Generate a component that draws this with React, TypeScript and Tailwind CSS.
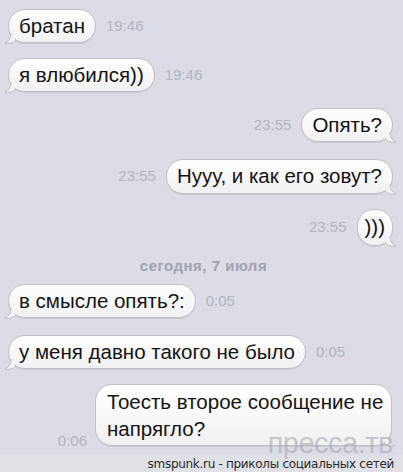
import React from "react";

type Msg = {
  text: string;
  time: string;
  out?: boolean;
  mt: string;
  h?: string;
  px?: string;
};

const TOP: Msg[] = [
  { text: "братан", time: "19:46", mt: "mt-[9px]" },
  { text: "я влюбился))", time: "19:46", mt: "mt-[15px]" },
  { text: "Опять?", time: "23:55", out: true, mt: "mt-[16px]" },
  { text: "Нууу, и как его зовут?", time: "23:55", out: true, mt: "mt-[17px]", h: "h-[35px]" },
  { text: ")))", time: "23:55", out: true, mt: "mt-[15px]", h: "h-[37px]", px: "px-[7px]" },
];

const TODAY: Msg[] = [
  { text: "в смысле опять?:", time: "0:05", mt: "mt-[9px]" },
  { text: "у меня давно такого не было", time: "0:05", mt: "mt-[17px]" },
];

function Tail({ out }: { out?: boolean }) {
  // little curl at the bottom corner of a bubble
  return (
    <svg
      width="14"
      height="12"
      viewBox="0 0 14 12"
      className={
        out
          ? "absolute -right-[5px] bottom-[-3px] -scale-x-100"
          : "absolute -left-[5px] bottom-[-3px]"
      }
    >
      <path d="M7 0 C7 5 5 8 1 10 C5 11 9 10 12 7 Z" fill="#f3f3f5" stroke="#b9bac3" strokeWidth="1" />
      <path d="M7 -1 L13 -1 L13 7 L8 4 Z" fill="#f3f3f5" />
    </svg>
  );
}

function Time({ t, className = "" }: { t: string; className?: string }) {
  return <span className={`text-[15px] leading-[17px] text-[#b2b4bf] shrink-0 ${className}`}>{t}</span>;
}

function Bubble({ m }: { m: Msg }) {
  return (
    <div className={`flex items-center gap-[10px] ${m.mt} ${m.out ? "justify-end pr-[10px]" : "pl-[8px]"}`}>
      {m.out && <Time t={m.time} className="-mt-[2px]" />}
      <div
        className={`relative flex items-center rounded-[17px] border border-[#bfc0c8] bg-gradient-to-b from-white to-[#f1f1f3] ${m.px ?? "px-[10px]"} text-[20.5px] leading-none text-[#141414] shadow-[0_1px_0_#c9cad2] ${m.h ?? "h-[34px]"}`}
      >
        <span className="relative z-10 whitespace-nowrap">{m.text}</span>
        <Tail out={m.out} />
      </div>
      {!m.out && <Time t={m.time} className="-mt-[2px]" />}
    </div>
  );
}

export default function App() {
  return (
    <div
      className="w-[403px] h-[472px] overflow-hidden bg-[#dbdce6] flex flex-col"
      style={{ fontFamily: '"Liberation Sans", Arial, sans-serif' }}
    >
      <div className="relative flex-1 flex flex-col">
        {TOP.map((m, i) => (
          <Bubble key={i} m={m} />
        ))}

        <div className="mt-[11px] text-center text-[15px] leading-[18px] font-bold tracking-[0.5px] text-[#a0a2ae] pl-[4px]">
          сегодня, 7 июля
        </div>

        {TODAY.map((m, i) => (
          <Bubble key={i} m={m} />
        ))}

        <div className="mt-[15px] flex items-end justify-end gap-[8px] pr-[11px]">
          <Time t="0:06" className="-mb-[3px]" />
          <div className="relative w-[297px] rounded-[17px] border border-[#bfc0c8] bg-gradient-to-b from-white to-[#f1f1f3] pl-[11px] pr-[4px] py-[3px] text-[20.5px] leading-[27px] text-[#141414] shadow-[0_1px_0_#c9cad2] whitespace-nowrap">
            <span className="relative z-10">
              Тоесть второе сообщение не
              <br />
              напрягло?
            </span>
            <Tail out />
          </div>
        </div>

        <div className="absolute right-[10px] bottom-[-3px] text-[29px] leading-none tracking-[-0.5px] text-[#a6a8b2]/60 z-20">
          пресса.тв
        </div>
      </div>

      <div
        className="h-[17px] bg-[#dfe1e7] flex items-center justify-end pr-[9px] text-[12px] tracking-[-0.3px] text-[#2a2a2a] leading-none"
        style={{ fontFamily: '"DejaVu Sans", sans-serif' }}
      >
        smspunk.ru - приколы социальных сетей
      </div>
    </div>
  );
}
